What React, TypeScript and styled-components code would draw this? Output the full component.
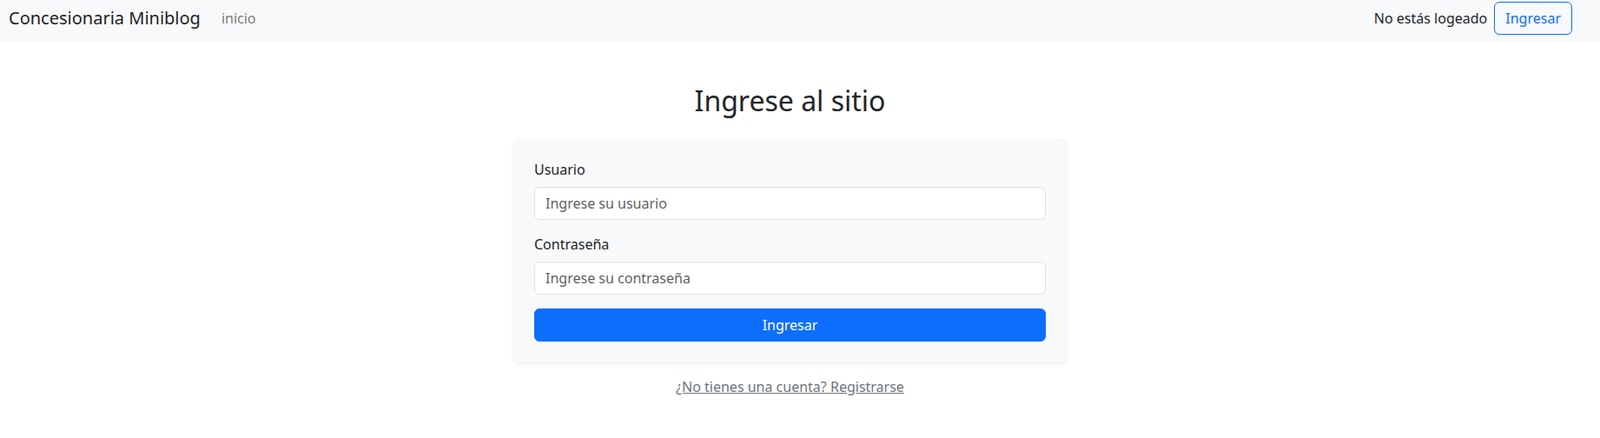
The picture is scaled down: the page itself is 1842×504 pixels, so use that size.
import React from 'react';
import styled, { createGlobalStyle } from 'styled-components';

const GlobalStyle = createGlobalStyle`
  *, *::before, *::after { box-sizing: border-box; }
  body {
    margin: 0;
    font-family: "Noto Sans", "Liberation Sans", sans-serif;
    font-size: 16px;
    line-height: 1.5;
    color: #212529;
    background: #fff;
  }
`;

const Navbar = styled.nav`
  display: flex;
  align-items: center;
  height: 48px;
  padding: 0 32px 6px 10px;
  background: #f8f9fa;
`;

const Brand = styled.a`
  font-size: 20px;
  line-height: 30px;
  padding: 5px 0;
  margin-right: 16px;
  color: rgba(0, 0, 0, 0.9);
  text-decoration: none;
`;

const NavLink = styled.a`
  padding: 8px;
  color: rgba(0, 0, 0, 0.55);
  text-decoration: none;
`;

const NavRight = styled.div`
  margin-left: auto;
  display: flex;
  align-items: center;
  gap: 8px;
`;

const NavText = styled.span`
  color: #212529;
`;

const Button = styled.button<{ $outline?: boolean; $block?: boolean }>`
  font: inherit;
  line-height: 24px;
  padding: 6px 12px;
  border-radius: 6px;
  border: 1px solid #0d6efd;
  cursor: pointer;
  background: ${(p) => (p.$outline ? 'transparent' : '#0d6efd')};
  color: ${(p) => (p.$outline ? '#0d6efd' : '#fff')};
  width: ${(p) => (p.$block ? '100%' : 'auto')};
  display: block;
`;

const Main = styled.main`
  margin-top: 49px;
  padding-right: 23px;
  display: flex;
  flex-direction: column;
  align-items: center;
`;

const Title = styled.h2`
  margin: 0 0 24px;
  font-size: 32px;
  font-weight: 400;
  line-height: 1.2;
`;

const Card = styled.form`
  width: 637px;
  padding: 24px;
  background: #f8f9fa;
  border-radius: 6px;
  box-shadow: 0 2px 4px rgba(0, 0, 0, 0.075);
`;

const Field = styled.div`
  margin-bottom: 16px;
`;

const Label = styled.label`
  display: block;
  margin-bottom: 8px;
`;

const Input = styled.input`
  display: block;
  width: 100%;
  font: inherit;
  line-height: 24px;
  padding: 6px 12px;
  color: #212529;
  background: #fff;
  border: 1px solid #dee2e6;
  border-radius: 6px;

  &::placeholder {
    color: rgba(33, 37, 41, 0.75);
  }
`;

const RegisterLink = styled.a`
  margin-top: 16px;
  color: #6c757d;
  text-decoration: underline;
`;

export default function App() {
  return (
    <>
      <GlobalStyle />
      <Navbar>
        <Brand href="#">Concesionaria Miniblog</Brand>
        <NavLink href="#">inicio</NavLink>
        <NavRight>
          <NavText>No estás logeado</NavText>
          <Button $outline type="button">Ingresar</Button>
        </NavRight>
      </Navbar>
      <Main>
        <Title>Ingrese al sitio</Title>
        <Card onSubmit={(e) => e.preventDefault()}>
          <Field>
            <Label htmlFor="usuario">Usuario</Label>
            <Input id="usuario" type="text" placeholder="Ingrese su usuario" />
          </Field>
          <Field>
            <Label htmlFor="password">Contraseña</Label>
            <Input id="password" type="password" placeholder="Ingrese su contraseña" />
          </Field>
          <Button $block type="submit">Ingresar</Button>
        </Card>
        <RegisterLink href="#">¿No tienes una cuenta? Registrarse</RegisterLink>
      </Main>
    </>
  );
}
